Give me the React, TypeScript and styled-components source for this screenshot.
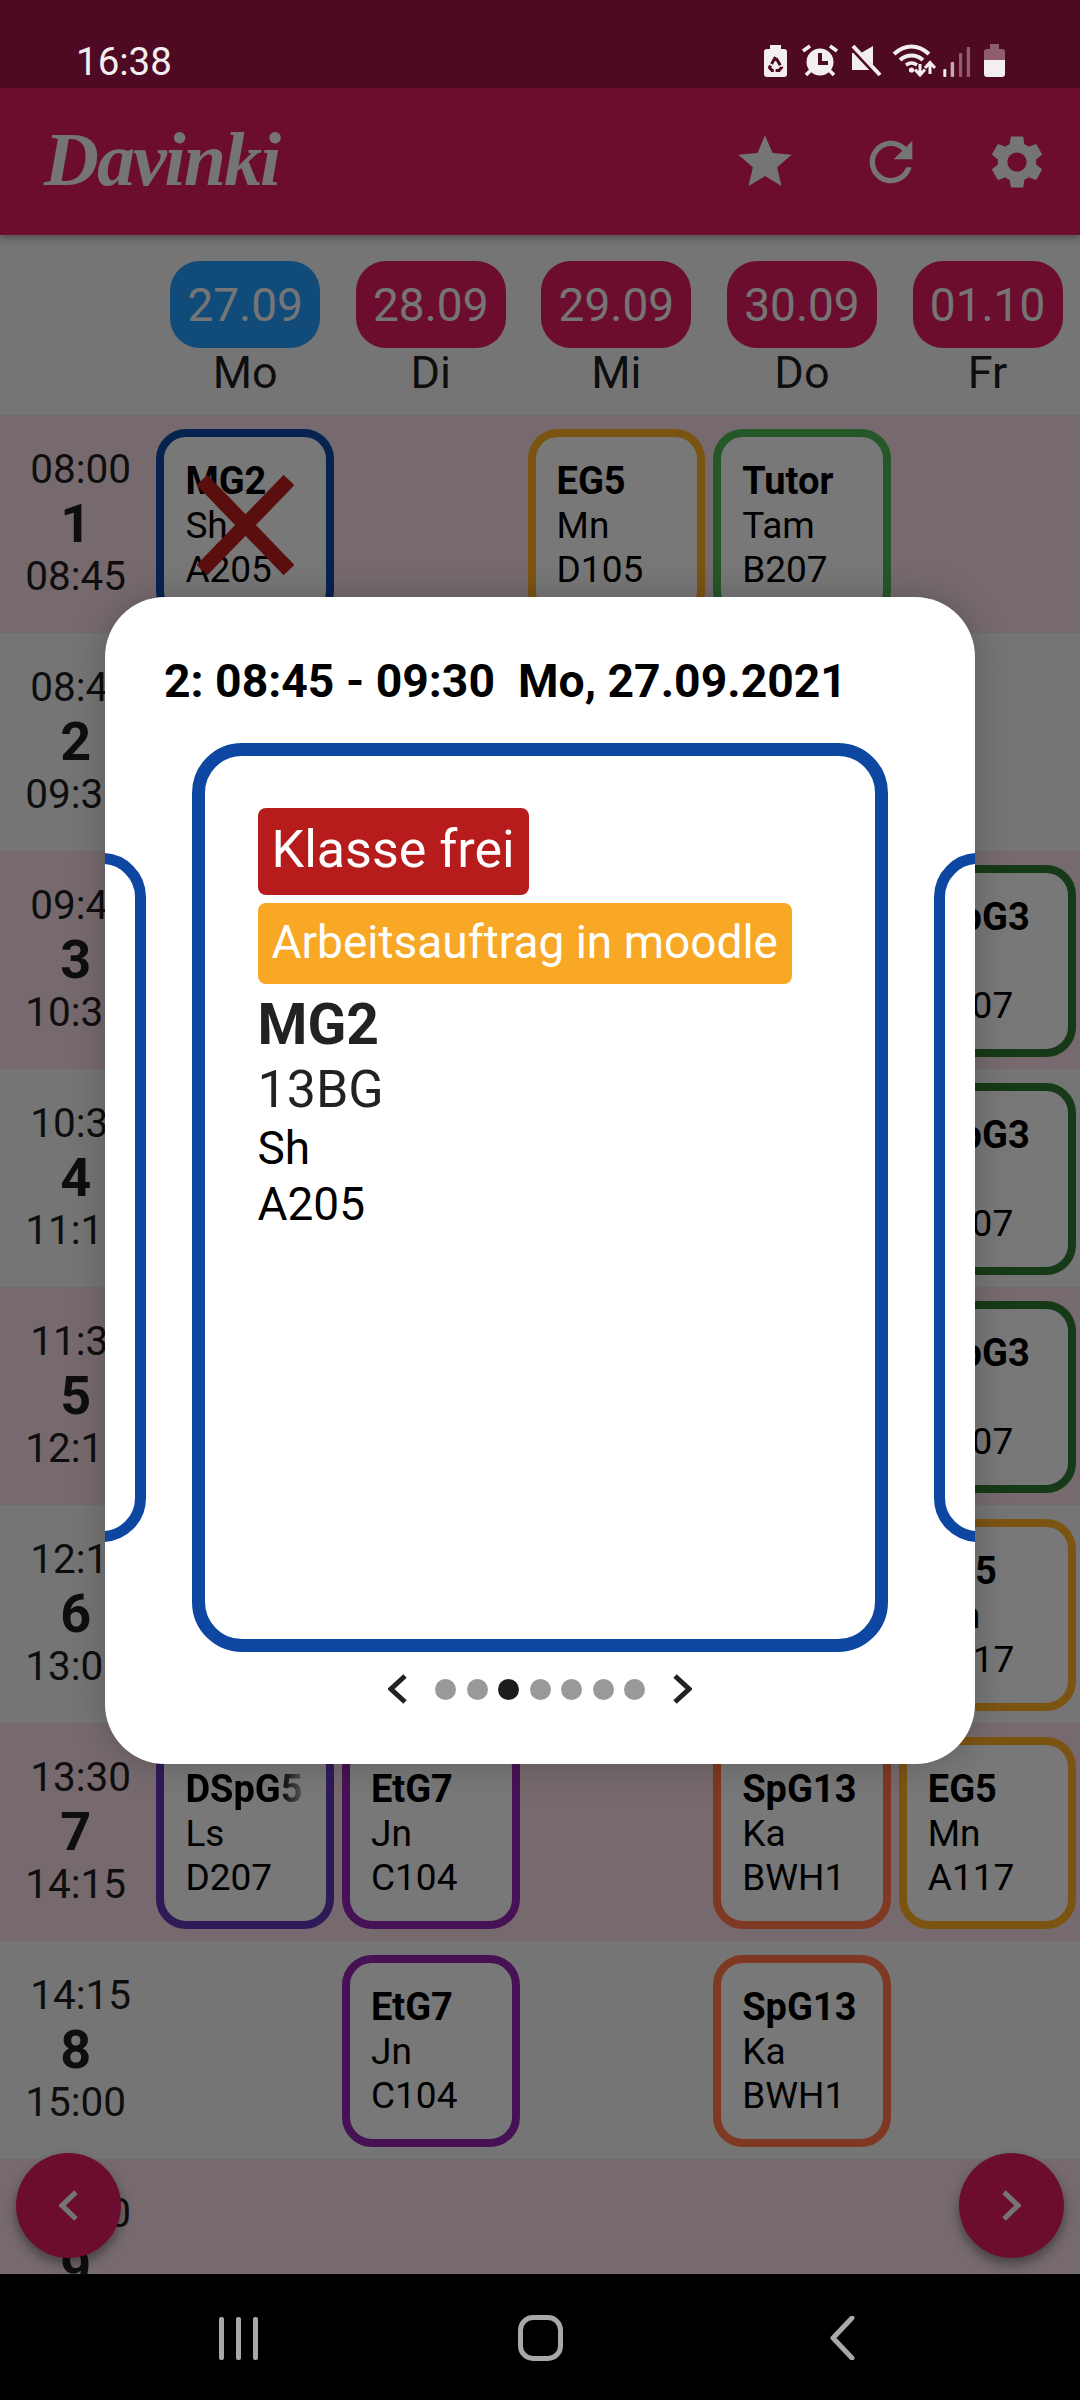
import React from 'react'
import styled, { createGlobalStyle } from 'styled-components'

const GlobalStyle = createGlobalStyle`
  html, body {
    margin: 0;
    padding: 0;
    background: #000;
  }
  * {
    box-sizing: border-box;
  }
`

const Screen = styled.div`
  position: relative;
  width: 1080px;
  height: 2400px;
  display: flex;
  flex-direction: column;
  overflow: hidden;
  background: #ebebeb;
  font-family: Roboto, 'Noto Sans', sans-serif;
  color: #1c1c1c;
`

const StatusBar = styled.div`
  position: relative;
  z-index: 2;
  height: 88px;
  flex: none;
  display: flex;
  align-items: flex-start;
  justify-content: space-between;
  padding: 39px 75px 0 76px;
  background: #4e0a22;
  color: #f3eef0;
`

const Clock = styled.span`
  font-size: 38.5px;
  line-height: 46px;
`

const StatusIcons = styled.svg`
  width: 241px;
  height: 34px;
  margin-top: 5px;
`

const AppBar = styled.header`
  position: relative;
  height: 147px;
  flex: none;
  display: flex;
  align-items: center;
  background: #d81b60;
  color: #ebebeb;
  box-shadow: 0 3px 8px rgba(0, 0, 0, 0.35);
`

const Logo = styled.div`
  flex: 1;
  padding: 0 0 6px 44px;
  font-family: 'Liberation Serif', serif;
  font-style: italic;
  font-weight: 700;
  font-size: 76px;
  line-height: 90px;
  letter-spacing: -2px;
`

const ActionButton = styled.div`
  width: 126px;
  display: flex;
  justify-content: center;
  svg {
    width: 64px;
    height: 64px;
    fill: currentColor;
  }
`

const DayHeader = styled.div`
  height: 180px;
  flex: none;
  display: grid;
  grid-template-columns: 148.4px repeat(5, 177.6px);
  column-gap: 8px;
  padding-top: 26px;
`

const DayColumn = styled.div<{ $col: number }>`
  grid-column: ${({ $col }) => $col + 2};
  display: flex;
  flex-direction: column;
  align-items: center;
`

const DatePill = styled.div<{ $today?: boolean }>`
  width: 150px;
  height: 87px;
  border-radius: 30px;
  display: flex;
  align-items: center;
  justify-content: center;
  background: ${({ $today }) => ($today ? '#2196f3' : '#d81b60')};
  color: #ebebeb;
  font-size: 46px;
`

const DayName = styled.div`
  font-size: 45px;
  line-height: 50px;
`

const Rows = styled.div`
  flex: 1;
  min-height: 0;
  overflow: hidden;
`

const Row = styled.div<{ $tinted: boolean }>`
  height: 218px;
  display: grid;
  grid-template-columns: 148.4px repeat(5, 177.6px);
  column-gap: 8px;
  align-items: start;
  padding-top: 14px;
  background: ${({ $tinted }) => ($tinted ? '#ecd4dc' : '#ebebeb')};
`

const TimeColumn = styled.div`
  grid-column: 1;
  grid-row: 1;
  padding: 14px 0 0 3px;
  display: flex;
  flex-direction: column;
  align-items: center;
  font-size: 40.5px;
  line-height: 53.5px;
`

const TimeStart = styled.div`
  padding-left: 10px;
`

const Period = styled.div`
  font-size: 54px;
  font-weight: 700;
`

const Lesson = styled.div<{ $col: number; $color: string }>`
  position: relative;
  grid-column: ${({ $col }) => $col + 2};
  grid-row: 1;
  height: 192px;
  padding: 22px 0 0 21px;
  border: 8px solid ${({ $color }) => $color};
  border-radius: 30px;
  background: #f0f0f0;
  font-size: 37px;
  line-height: 44.5px;
  white-space: pre;
  overflow: hidden;
  color: #000;
`

const LessonTitle = styled.div<{ $fade?: boolean }>`
  font-size: 38px;
  font-weight: 700;
  ${({ $fade }) =>
    $fade &&
    `
    -webkit-mask-image: linear-gradient(90deg, #000 94px, rgba(0, 0, 0, 0.15) 122px);
    mask-image: linear-gradient(90deg, #000 94px, rgba(0, 0, 0, 0.15) 122px);
  `}
`

const CrossMark = styled.svg`
  position: absolute;
  left: 33px;
  top: 38px;
  width: 97px;
  height: 100px;
`

const Scrim = styled.div`
  position: absolute;
  inset: 0;
  z-index: 1;
  background: rgba(0, 0, 0, 0.5);
`

const RoundNav = styled.div<{ $side: 'left' | 'right' }>`
  position: absolute;
  top: 2153px;
  ${({ $side }) => ($side === 'left' ? 'left: 16px;' : 'right: 16px;')}
  width: 105px;
  height: 105px;
  border-radius: 50%;
  display: flex;
  align-items: center;
  justify-content: center;
  background: #d81b60;
  box-shadow: 0 6px 12px rgba(0, 0, 0, 0.4);
  svg {
    width: 19px;
    height: 31px;
  }
`

const Modal = styled.div`
  position: absolute;
  z-index: 3;
  left: 105px;
  top: 597px;
  width: 870px;
  height: 1167px;
  padding-top: 54px;
  border-radius: 60px;
  background: #fff;
  overflow: hidden;
`

const ModalShadow = styled.div`
  position: absolute;
  z-index: 2;
  left: 105px;
  top: 597px;
  width: 870px;
  height: 1167px;
  border-radius: 60px;
  box-shadow: 0 0 36px rgba(0, 0, 0, 0.22);
`

const ModalTitle = styled.div`
  height: 60px;
  padding-left: 59px;
  font-size: 46.3px;
  font-weight: 700;
  line-height: 60px;
  white-space: pre;
  color: #000;
`

const Carousel = styled.div`
  margin-top: 32px;
  height: 909px;
  display: flex;
  align-items: center;
  justify-content: center;
  gap: 46px;
`

const SideCard = styled.div`
  flex: none;
  width: 300px;
  height: 689px;
  border: 11px solid #0d47a1;
  border-radius: 44px;
`

const MainCard = styled.div`
  flex: none;
  width: 696px;
  height: 909px;
  padding: 52px 0 0 52.5px;
  border: 13px solid #0d47a1;
  border-radius: 50px;
`

const Notice = styled.div<{ $color: string; $big?: boolean }>`
  display: table;
  height: ${({ $big }) => ($big ? '87px' : '81px')};
  margin-bottom: 8px;
  padding: 0 14px;
  border-radius: 8px;
  background: ${({ $color }) => $color};
  color: #fff;
  font-size: ${({ $big }) => ($big ? '52px' : '46px')};
  line-height: ${({ $big }) => ($big ? '84px' : '78px')};
  white-space: nowrap;
`

const DetailTitle = styled.div`
  margin-top: 9px;
  font-size: 57px;
  font-weight: 700;
  line-height: 64px;
  color: #222;
`

const DetailClass = styled.div`
  margin-top: 3px;
  font-size: 52px;
  line-height: 60px;
  color: #222;
`

const DetailLine = styled.div`
  font-size: 46px;
  line-height: 56px;
  color: #000;
`

const Pager = styled.div`
  margin-top: 22px;
  height: 30px;
  display: flex;
  align-items: center;
  justify-content: center;
  gap: 10.5px;
  svg {
    width: 19px;
    height: 30px;
  }
`

const PagerArrow = styled.div<{ $side: 'left' | 'right' }>`
  display: flex;
  ${({ $side }) => ($side === 'left' ? 'margin-right: 17.5px;' : 'margin-left: 17.5px;')}
`

const Dot = styled.span<{ $active: boolean }>`
  width: 21px;
  height: 21px;
  border-radius: 50%;
  background: ${({ $active }) => ($active ? '#1c1c1c' : '#999')};
`

const NavBar = styled.nav`
  position: relative;
  z-index: 2;
  height: 126px;
  flex: none;
  display: grid;
  grid-template-columns: 479px 122px 479px;
  background: #000;
  color: #a8a8a8;
`

const NavSlot = styled.div<{ $align: string; $inset?: string; $top: number }>`
  display: flex;
  justify-content: ${({ $align }) => $align};
  padding: ${({ $top }) => $top}px ${({ $inset }) => $inset || '0'} 0;
`

const RecentBars = styled.div`
  width: 39px;
  height: 43px;
  display: flex;
  justify-content: space-between;
  span {
    width: 5px;
    border-radius: 2px;
    background: currentColor;
  }
`

const HomeRing = styled.div`
  width: 45px;
  height: 46px;
  border: 5px solid currentColor;
  border-radius: 15px;
`

const BackIcon = styled.svg`
  width: 26px;
  height: 44px;
`

type Card = { col: number; title: string; teacher: string; room: string; color: string; cancelled?: boolean; fade?: boolean }

const BLUE = '#0d47a1'
const ORANGE = '#f9a825'
const GREEN = '#4caf50'
const DARK_GREEN = '#2c7430'
const INDIGO = '#5e35b1'
const PURPLE = '#8e24aa'
const RUST = '#ff7043'

const days = [
  { date: '27.09', name: 'Mo', today: true },
  { date: '28.09', name: 'Di' },
  { date: '29.09', name: 'Mi' },
  { date: '30.09', name: 'Do' },
  { date: '01.10', name: 'Fr' }
]

// the reference's title sits a little further in than the others
const spg3: Card = { col: 4, title: '\u00a0SpG3', teacher: 'Ka', room: 'B207', color: DARK_GREEN }

const periods: { start: string; end: string; cards: Card[] }[] = [
  {
    start: '08:00',
    end: '08:45',
    cards: [
      { col: 0, title: 'MG2', teacher: 'Sh', room: 'A205', color: BLUE, cancelled: true },
      { col: 2, title: 'EG5', teacher: 'Mn', room: 'D105', color: ORANGE },
      { col: 3, title: 'Tutor', teacher: 'Tam', room: 'B207', color: GREEN }
    ]
  },
  { start: '08:45', end: '09:30', cards: [] },
  { start: '09:45', end: '10:30', cards: [spg3] },
  { start: '10:30', end: '11:15', cards: [spg3] },
  { start: '11:30', end: '12:15', cards: [spg3] },
  {
    start: '12:15',
    end: '13:00',
    cards: [{ col: 4, title: 'EG5', teacher: 'Mn', room: 'A117', color: ORANGE }]
  },
  {
    start: '13:30',
    end: '14:15',
    cards: [
      { col: 0, title: 'DSpG5', teacher: 'Ls', room: 'D207', color: INDIGO, fade: true },
      { col: 1, title: 'EtG7', teacher: 'Jn', room: 'C104', color: PURPLE },
      { col: 3, title: 'SpG13', teacher: 'Ka', room: 'BWH1', color: RUST },
      { col: 4, title: 'EG5', teacher: 'Mn', room: 'A117', color: ORANGE }
    ]
  },
  {
    start: '14:15',
    end: '15:00',
    cards: [
      { col: 1, title: 'EtG7', teacher: 'Jn', room: 'C104', color: PURPLE },
      { col: 3, title: 'SpG13', teacher: 'Ka', room: 'BWH1', color: RUST }
    ]
  },
  { start: '15:00', end: '15:45', cards: [] }
]

const Chevron = ({ dir, color, width = 5 }: { dir: 'left' | 'right'; color: string; width?: number }) => (
  <svg viewBox="0 0 19 30" preserveAspectRatio="none">
    <polyline
      points={dir === 'left' ? '17,2 3,15 17,28' : '2,2 16,15 2,28'}
      fill="none"
      stroke={color}
      strokeWidth={width}
    />
  </svg>
)

function StatusGlyphs() {
  const ink = '#f3eef0'
  const bg = '#4e0a22'
  const dim = '#8f5d70'
  return (
    <StatusIcons viewBox="0 0 241 34">
      {/* battery saver */}
      <rect x="6" y="1" width="11" height="6" fill={ink} />
      <rect x="0" y="5" width="23" height="28" rx="3" fill={ink} />
      <path d="M11.5 13l-6 10.500 2.500 3h7l2.500-3z" fill="none" stroke={bg} strokeWidth="3" strokeDasharray="8 1.800" />
      {/* alarm */}
      <circle cx="56" cy="18" r="13.5" fill={ink} />
      <path d="M56 9v10h8" fill="none" stroke={bg} strokeWidth="4" />
      <path d="M39 7l7-5M73 7l-7-5M42 31l5-5M70 31l-5-5" stroke={ink} strokeWidth="3.6" />
      {/* muted */}
      <path d="M88 9h9l12-7v24l-12 0h-9z" fill={ink} />
      <path d="M86 1l29 31" stroke={bg} strokeWidth="6" />
      <path d="M89 2l27 29" stroke={ink} strokeWidth="4" />
      {/* wifi with arrows */}
      <path d="M130 10c11-10 24-10 35 0" fill="none" stroke={ink} strokeWidth="4" />
      <path d="M136 16c7-6 16-6 23 0" fill="none" stroke={ink} strokeWidth="4" />
      <path d="M142 21c3.500-2.500 7.500-2.500 11 0" fill="none" stroke={ink} strokeWidth="3.6" />
      <circle cx="147.500" cy="26" r="2.600" fill={ink} />
      <path d="M156 20v10M151 25.500l5 5.500 5-5.500" fill="none" stroke={ink} strokeWidth="3" />
      <path d="M166 30v-11M161 24l5-5.500 5 5.500" fill="none" stroke={ink} strokeWidth="3" />
      {/* signal */}
      <rect x="179.300" y="25" width="3" height="8" rx="1" fill={ink} />
      <rect x="186.700" y="18" width="3.400" height="15" rx="1" fill="#c8a8b4" />
      <rect x="195" y="9" width="3.200" height="24" rx="1" fill={dim} />
      <rect x="202.700" y="3" width="3.400" height="30" rx="1" fill={dim} />
      {/* battery */}
      <rect x="226" y="0" width="9" height="6" fill={dim} />
      <path d="M220 16V8a3 3 0 0 1 3-3h15a3 3 0 0 1 3 3v8z" fill={dim} />
      <path d="M220 16h21v14a3 3 0 0 1-3 3h-15a3 3 0 0 1-3-3z" fill={ink} />
    </StatusIcons>
  )
}

export default function App() {
  return (
    <Screen>
      <GlobalStyle />
      <StatusBar>
        <Clock>16:38</Clock>
        <StatusGlyphs />
      </StatusBar>

      <AppBar>
        <Logo>Davinki</Logo>
        <ActionButton>
          <svg viewBox="0 0 24 24">
            <path d="M12 17.27L18.18 21l-1.64-7.03L22 9.24l-7.19-.61L12 2 9.19 8.63 2 9.24l5.46 4.73L5.82 21z" />
          </svg>
        </ActionButton>
        <ActionButton>
          <svg viewBox="0 0 24 24">
            <path d="M17.65 6.35C16.2 4.9 14.21 4 12 4c-4.42 0-7.99 3.58-7.99 8s3.57 8 7.99 8c3.73 0 6.84-2.55 7.73-6h-2.08c-.82 2.33-3.04 4-5.65 4-3.31 0-6-2.69-6-6s2.69-6 6-6c1.66 0 3.14.69 4.22 1.78L13 11h7V4l-2.35 2.35z" />
          </svg>
        </ActionButton>
        <ActionButton>
          <svg viewBox="0 0 24 24">
            <path d="M19.14 12.94c.04-.3.06-.61.06-.94 0-.32-.02-.64-.07-.94l2.03-1.58c.18-.14.23-.41.12-.61l-1.92-3.32c-.12-.22-.37-.29-.59-.22l-2.39.96c-.5-.38-1.03-.7-1.62-.94l-.36-2.54c-.04-.24-.24-.41-.48-.41h-3.84c-.24 0-.43.17-.47.41l-.36 2.54c-.59.24-1.13.57-1.62.94l-2.39-.96c-.22-.08-.47 0-.59.22L2.74 8.87c-.12.21-.08.47.12.61l2.03 1.58c-.05.3-.09.63-.09.94s.02.64.07.94l-2.03 1.58c-.18.14-.23.41-.12.61l1.92 3.32c.12.22.37.29.59.22l2.39-.96c.5.38 1.03.7 1.62.94l.36 2.54c.05.24.24.41.48.41h3.84c.24 0 .44-.17.47-.41l.36-2.54c.59-.24 1.13-.56 1.62-.94l2.39.96c.22.08.47 0 .59-.22l1.92-3.32c.12-.22.07-.47-.12-.61l-2.01-1.58zM12 15.6c-1.98 0-3.6-1.62-3.6-3.6s1.62-3.6 3.6-3.6 3.6 1.62 3.6 3.6-1.62 3.6-3.6 3.6z" />
          </svg>
        </ActionButton>
      </AppBar>

      <DayHeader>
        {days.map((day, i) => (
          <DayColumn key={day.name} $col={i}>
            <DatePill $today={day.today}>{day.date}</DatePill>
            <DayName>{day.name}</DayName>
          </DayColumn>
        ))}
      </DayHeader>

      <Rows>
        {periods.map((period, i) => (
          <Row key={period.start} $tinted={i % 2 === 0}>
            <TimeColumn>
              <TimeStart>{period.start}</TimeStart>
              <Period>{i + 1}</Period>
              <div>{period.end}</div>
            </TimeColumn>
            {period.cards.map(card => (
              <Lesson key={card.col} $col={card.col} $color={card.color}>
                <LessonTitle $fade={card.fade}>{card.title}</LessonTitle>
                <div>{card.teacher}</div>
                <div>{card.room}</div>
                {card.cancelled && (
                  <CrossMark viewBox="0 0 97 100">
                    <path d="M5 5l87 90M92 5L5 95" stroke="#b71c1c" strokeWidth="15" fill="none" />
                  </CrossMark>
                )}
              </Lesson>
            ))}
          </Row>
        ))}
      </Rows>

      <NavBar>
        <NavSlot $align="flex-start" $inset="219px" $top={43}>
          <RecentBars>
            <span />
            <span />
            <span />
          </RecentBars>
        </NavSlot>
        <NavSlot $align="center" $top={41}>
          <HomeRing />
        </NavSlot>
        <NavSlot $align="flex-end" $inset="225px" $top={42}>
          <BackIcon viewBox="0 0 26 44">
            <polyline points="23,2 4,22 23,42" fill="none" stroke="currentColor" strokeWidth="5" strokeLinecap="round" strokeLinejoin="round" />
          </BackIcon>
        </NavSlot>
      </NavBar>

      <RoundNav $side="left">
        <Chevron dir="left" color="#ebebeb" />
      </RoundNav>
      <RoundNav $side="right">
        <Chevron dir="right" color="#ebebeb" />
      </RoundNav>

      <Scrim />
      <ModalShadow />

      <Modal>
        <ModalTitle>{'2: 08:45 - 09:30  Mo, 27.09.2021'}</ModalTitle>
        <Carousel>
          <SideCard />
          <MainCard>
            <Notice $color="#b71c1c" $big>
              Klasse frei
            </Notice>
            <Notice $color="#f9a825">Arbeitsauftrag in moodle</Notice>
            <DetailTitle>MG2</DetailTitle>
            <DetailClass>13BG</DetailClass>
            <DetailLine>Sh</DetailLine>
            <DetailLine>A205</DetailLine>
          </MainCard>
          <SideCard />
        </Carousel>
        <Pager>
          <PagerArrow $side="left">
            <Chevron dir="left" color="#222" />
          </PagerArrow>
          {[0, 1, 2, 3, 4, 5, 6].map(i => (
            <Dot key={i} $active={i === 2} />
          ))}
          <PagerArrow $side="right">
            <Chevron dir="right" color="#222" />
          </PagerArrow>
        </Pager>
      </Modal>
    </Screen>
  )
}
